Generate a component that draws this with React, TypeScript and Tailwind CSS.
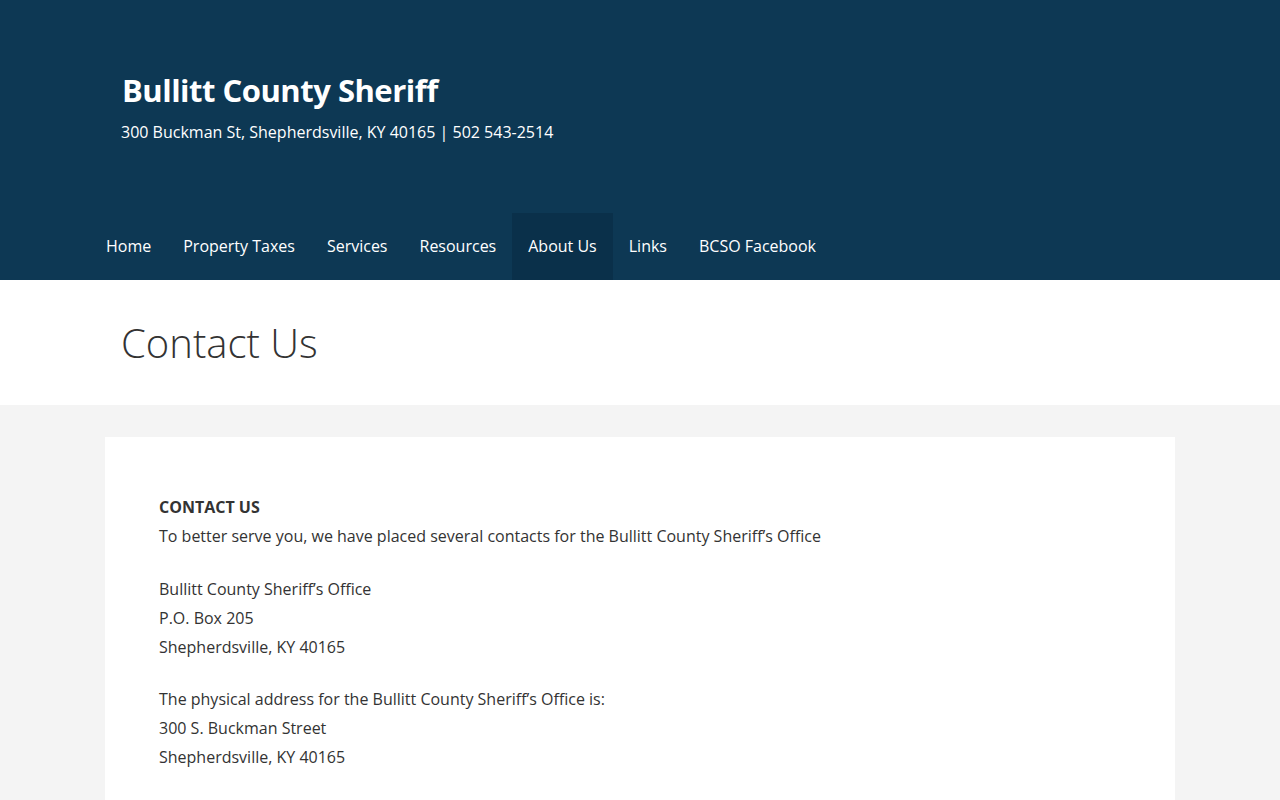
const navItems = ['Home', 'Property Taxes', 'Services', 'Resources', 'About Us', 'Links', 'BCSO Facebook'];

export default function App() {
  return (
    <div className="min-h-[800px] bg-[#f4f4f4] font-['Open_Sans',sans-serif]">
      <header className="bg-[#0d3854] text-white">
        <div className="mx-auto w-[1070px]">
          <div className="px-[17px] pt-[68px] h-[213px]">
            <h1 className="text-[31px] font-bold leading-[44px] tracking-[-0.5px]">Bullitt County Sheriff</h1>
            <p className="mt-[9px] -ml-px text-[16px] leading-[22px]">
              300 Buckman St, Shepherdsville, KY 40165 | 502 543-2514
            </p>
          </div>
          <nav className="-mx-[15px] flex h-[67px]">
            {navItems.map((item) => (
              <a
                key={item}
                href="#"
                className={
                  'flex items-center px-4 pb-[2px] text-[16px] text-white ' +
                  (item === 'About Us' ? 'bg-[#0a304a]' : '')
                }
              >
                {item}
              </a>
            ))}
          </nav>
        </div>
      </header>

      <div className="bg-white">
        <div className="mx-auto flex h-[125px] w-[1070px] items-center px-[16px]">
          <h2 className="text-[40px] font-light text-[#333]">Contact Us</h2>
        </div>
      </div>

      <main className="mx-auto w-[1070px] pt-8">
        <div className="bg-white px-[54px] pt-[56px] pb-[40px] text-[16px] leading-[29px] text-[#333]">
          <p className="mb-[24px]">
            <strong className="font-bold">CONTACT US</strong>
            <br />
            To better serve you, we have placed several contacts for the Bullitt County Sheriff’s Office
          </p>
          <p className="mb-[23px]">
            Bullitt County Sheriff’s Office
            <br />
            P.O. Box 205
            <br />
            Shepherdsville, KY 40165
          </p>
          <p className="mb-[23px]">
            The physical address for the Bullitt County Sheriff’s Office is:
            <br />
            300 S. Buckman Street
            <br />
            Shepherdsville, KY 40165
          </p>
        </div>
      </main>
    </div>
  );
}
